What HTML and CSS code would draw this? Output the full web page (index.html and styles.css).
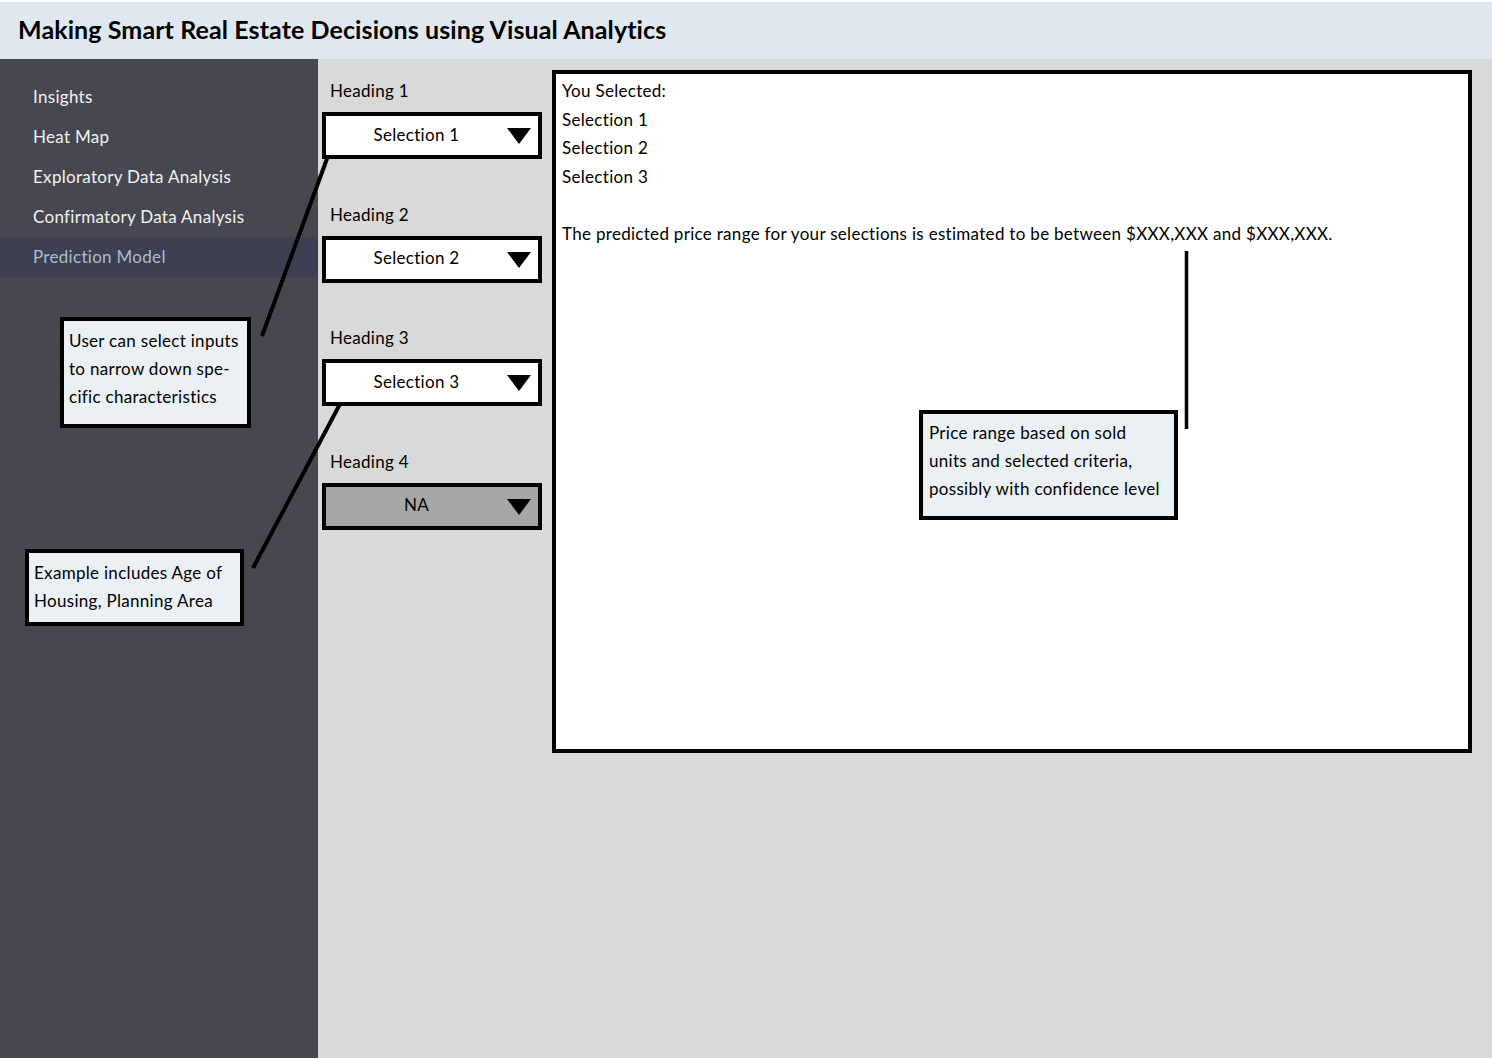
FILE: index.html
```html
<!DOCTYPE html>
<html lang="en">
<head>
<meta charset="utf-8">
<title>Making Smart Real Estate Decisions using Visual Analytics</title>
<link rel="stylesheet" href="styles.css">
</head>
<body>
<div class="page">
  <header class="topbar">
    <h1 class="title">Making Smart Real Estate Decisions using Visual Analytics</h1>
  </header>
  <div class="layout">
    <nav class="sidebar">
      <a class="nav-item">Insights</a>
      <a class="nav-item">Heat Map</a>
      <a class="nav-item">Exploratory Data Analysis</a>
      <a class="nav-item">Confirmatory Data Analysis</a>
      <a class="nav-item active">Prediction Model</a>
    </nav>
    <main class="main">
      <section class="controls">
        <div class="field">
          <div class="field-label">Heading 1</div>
          <div class="dropdown"><span class="dropdown-value">Selection 1</span><span class="caret"></span></div>
        </div>
        <div class="field">
          <div class="field-label">Heading 2</div>
          <div class="dropdown"><span class="dropdown-value">Selection 2</span><span class="caret"></span></div>
        </div>
        <div class="field">
          <div class="field-label">Heading 3</div>
          <div class="dropdown"><span class="dropdown-value">Selection 3</span><span class="caret"></span></div>
        </div>
        <div class="field">
          <div class="field-label">Heading 4</div>
          <div class="dropdown disabled"><span class="dropdown-value">NA</span><span class="caret"></span></div>
        </div>
      </section>
      <section class="result">
        <p class="result-line">You Selected:</p>
        <p class="result-line">Selection 1</p>
        <p class="result-line">Selection 2</p>
        <p class="result-line">Selection 3</p>
        <p class="result-line blank">&nbsp;</p>
        <p class="result-line">The predicted price range for your selections is estimated to be between $XXX,XXX and $XXX,XXX.</p>
      </section>
    </main>
  </div>

  <svg class="connectors" width="1492" height="1058" viewBox="0 0 1492 1058" aria-hidden="true">
    <line x1="262" y1="336" x2="328" y2="156" />
    <line x1="253" y1="568" x2="340" y2="404" />
    <line x1="1186.5" y1="251" x2="1186.5" y2="429" class="thin" />
  </svg>

  <div class="note note-inputs">User can select inputs<br>to narrow down spe-<br>cific characteristics</div>
  <div class="note note-example">Example includes Age of<br>Housing, Planning Area</div>
  <div class="note note-price">Price range based on sold<br>units and selected criteria,<br>possibly with confidence level</div>
</div>
</body>
</html>
```

FILE: styles.css
```css
* { box-sizing: border-box; }

html, body {
  margin: 0;
  padding: 0;
}

body {
  font-family: Lato, "Open Sans", "Liberation Sans", sans-serif;
  color: #000;
  background: #d9d9d9;
}

.page {
  position: relative;
  width: 1492px;
  height: 1058px;
  overflow: hidden;
  display: flex;
  flex-direction: column;
}

.topbar {
  height: 59px;
  flex: none;
  background: #dee8ee;
  border-top: 2px solid #ffffff;
  display: flex;
  align-items: center;
  padding-left: 18px;
  padding-bottom: 3px;
}

.title {
  margin: 0;
  font-size: 25px;
  font-weight: 700;
  letter-spacing: 0.1px;
  color: #000;
}

.layout {
  flex: 1;
  display: flex;
}

.sidebar {
  width: 318px;
  flex: none;
  background: #474750;
  padding-top: 18px;
  display: flex;
  flex-direction: column;
}

.nav-item {
  display: block;
  height: 40px;
  line-height: 39px;
  padding-left: 33px;
  font-size: 17px;
  letter-spacing: 0.3px;
  color: #f2f2f2;
}

.nav-item.active {
  background: #3d4052;
  color: #a9bccd;
}

.main {
  flex: 1;
  display: flex;
  align-items: flex-start;
  padding-left: 4px;
}

.controls {
  width: 220px;
  padding-top: 20px;
  display: flex;
  flex-direction: column;
  gap: 43.5px;
}

.field-label {
  height: 24px;
  line-height: 24px;
  padding-left: 8px;
  font-size: 17px;
  letter-spacing: 0.3px;
  margin-bottom: 9px;
}

.dropdown {
  height: 47px;
  border: 4px solid #000;
  background: #ffffff;
  display: flex;
  align-items: center;
  padding-right: 7px;
}

.dropdown.disabled {
  background: #a6a6a6;
}

.dropdown-value {
  flex: 1;
  text-align: center;
  font-size: 17px;
  letter-spacing: 0.3px;
  padding-bottom: 3px;
}

.caret {
  width: 0;
  height: 0;
  border-left: 12.5px solid transparent;
  border-right: 12.5px solid transparent;
  border-top: 16px solid #000;
  margin-top: 1px;
}

.result {
  margin-left: 10px;
  margin-top: 11px;
  width: 920px;
  height: 683px;
  background: #ffffff;
  border: 4px solid #000;
  padding: 3px 6px;
}

.result-line {
  margin: 0;
  font-size: 17px;
  letter-spacing: 0.3px;
  line-height: 28.5px;
  white-space: nowrap;
}

.connectors {
  position: absolute;
  left: 0;
  top: 0;
  pointer-events: none;
}

.connectors line {
  stroke: #000;
  stroke-width: 4;
}

.connectors line.thin {
  stroke-width: 3.5;
}

.note {
  position: absolute;
  background: #ebf0f5;
  border: 4px solid #000;
  font-size: 17px;
  letter-spacing: 0.3px;
  line-height: 28px;
  white-space: nowrap;
  color: #000;
}

.note-inputs {
  left: 60px;
  top: 317px;
  width: 191px;
  height: 111px;
  padding: 6px 5px 0 5px;
}

.note-example {
  left: 25px;
  top: 549px;
  width: 219px;
  height: 77px;
  padding: 6px 5px 0 5px;
}

.note-price {
  left: 919px;
  top: 410px;
  width: 259px;
  height: 110px;
  padding: 5px 6px 0 6px;
}
```
